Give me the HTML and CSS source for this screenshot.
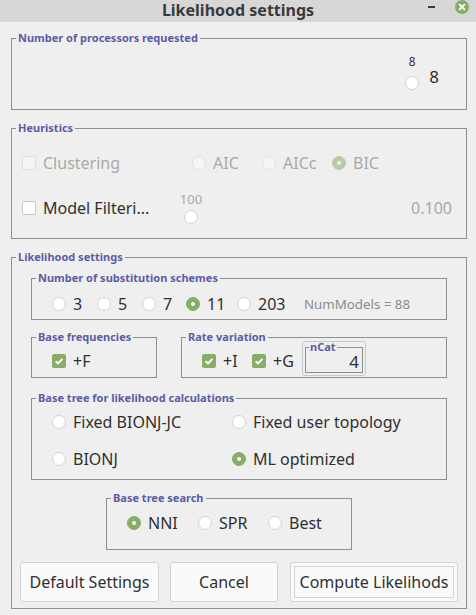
FILE: index.html
```html
<!DOCTYPE html>
<html>
<head>
<meta charset="utf-8">
<link rel="stylesheet" href="styles.css">
</head>
<body>
<div class="titlebar">
  <span class="title">Likelihood settings</span>
  <span class="minimize"></span>
  <span class="close"><svg width="14" height="14" viewBox="0 0 14 14"><circle cx="7" cy="7" r="7" fill="#87ad65"/><path d="M4.6 4.6 L9.4 9.4 M9.4 4.6 L4.6 9.4" stroke="#fff" stroke-width="1.8" stroke-linecap="round"/></svg></span>
</div>
<div class="content">
  <fieldset class="group g-proc">
    <legend>Number of processors requested</legend>
    <div class="proc-body">
      <div class="slider">
        <span class="slider-label">8</span>
        <span class="knob"></span>
      </div>
      <span class="proc-value">8</span>
    </div>
  </fieldset>

  <fieldset class="group g-heur">
    <legend>Heuristics</legend>
    <div class="heur-body">
      <div class="heur-row1">
        <label class="item disabled"><span class="check dis"></span>Clustering</label>
        <label class="item disabled"><span class="radio dis"></span>AIC</label>
        <label class="item disabled"><span class="radio dis"></span>AICc</label>
        <label class="item disabled"><span class="radio dis-on"></span>BIC</label>
      </div>
      <div class="heur-row2">
        <label class="item model"><span class="check"></span>Model Filteri...</label>
        <div class="slider slider-heur">
          <span class="slider-label grey">100</span>
          <span class="knob"></span>
        </div>
        <span class="heur-value">0.100</span>
      </div>
    </div>
  </fieldset>

  <fieldset class="group g-like">
    <legend>Likelihood settings</legend>
    <fieldset class="group g-subst">
      <legend>Number of substitution schemes</legend>
      <div class="subst-row">
        <label class="item"><span class="radio"></span>3</label>
        <label class="item"><span class="radio"></span>5</label>
        <label class="item"><span class="radio"></span>7</label>
        <label class="item"><span class="radio on"></span>11</label>
        <label class="item"><span class="radio"></span>203</label>
        <span class="nummodels">NumModels = 88</span>
      </div>
    </fieldset>

    <div class="pair">
      <fieldset class="group g-freq">
        <legend>Base frequencies</legend>
        <div class="pair-row">
          <label class="item"><span class="check on"><svg width="14" height="14" viewBox="0 0 14 14"><path d="M3.6 7.2 L6 9.4 L10.4 4.8" fill="none" stroke="#fff" stroke-width="1.9"/></svg></span>+F</label>
        </div>
      </fieldset>
      <fieldset class="group g-rate">
        <legend>Rate variation</legend>
        <div class="pair-row">
          <label class="item rate-i"><span class="check on"><svg width="14" height="14" viewBox="0 0 14 14"><path d="M3.6 7.2 L6 9.4 L10.4 4.8" fill="none" stroke="#fff" stroke-width="1.9"/></svg></span>+I</label>
          <label class="item rate-g"><span class="check on"><svg width="14" height="14" viewBox="0 0 14 14"><path d="M3.6 7.2 L6 9.4 L10.4 4.8" fill="none" stroke="#fff" stroke-width="1.9"/></svg></span>+G</label>
          <div class="ncat">
            <fieldset class="ncat-fs">
              <legend>nCat</legend>
              <div class="ncat-value">4</div>
            </fieldset>
          </div>
        </div>
      </fieldset>
    </div>

    <fieldset class="group g-tree">
      <legend>Base tree for likelihood calculations</legend>
      <div class="tree-grid">
        <label class="item"><span class="radio"></span>Fixed BIONJ-JC</label>
        <label class="item"><span class="radio"></span>Fixed user topology</label>
        <label class="item"><span class="radio"></span>BIONJ</label>
        <label class="item"><span class="radio on"></span>ML optimized</label>
      </div>
    </fieldset>

    <fieldset class="group g-search">
      <legend>Base tree search</legend>
      <div class="search-row">
        <label class="item"><span class="radio on"></span>NNI</label>
        <label class="item"><span class="radio"></span>SPR</label>
        <label class="item"><span class="radio"></span>Best</label>
      </div>
    </fieldset>

    <div class="buttons">
      <button class="btn btn-default">Default Settings</button>
      <button class="btn btn-cancel">Cancel</button>
      <button class="btn btn-compute"><span class="focus">Compute Likelihods</span></button>
    </div>
  </fieldset>
</div>
</body>
</html>
```

FILE: styles.css
```css
* { box-sizing: border-box; }
html, body {
  margin: 0;
  padding: 0;
  background: #efefef;
  font-family: "Noto Sans", "DejaVu Sans", sans-serif;
  color: #2f2f2f;
  width: 476px;
  height: 615px;
  overflow: hidden;
}

.titlebar {
  height: 22px;
  background: #d7d7d7;
  display: flex;
  align-items: center;
  justify-content: center;
  position: relative;
}
.title {
  font-weight: bold;
  font-size: 16px;
  color: #3a3a3a;
  line-height: 22px;
  margin-top: -3px;
}
.minimize {
  position: absolute;
  left: 428px;
  top: 6px;
  width: 7px;
  height: 2px;
  background: #3a3a3a;
}
.close {
  position: absolute;
  left: 455px;
  top: 0px;
  width: 14px;
  height: 14px;
  display: block;
}
.close svg { display: block; }

.content {
  padding: 9px 9px 0 11px;
}

fieldset.group {
  margin: 0;
  padding: 0;
  border: 1px solid #8f8f8f;
  min-width: 0;
}
fieldset.group > legend {
  font-family: "Noto Sans", "DejaVu Sans", sans-serif;
  font-weight: bold;
  font-size: 11px;
  line-height: 14px;
  color: #5c5ca4;
  padding: 0 2px;
  margin-left: 4px;
}

.item {
  display: flex;
  align-items: center;
  font-size: 16px;
  line-height: 20px;
  white-space: nowrap;
}
.item.disabled { color: #a9a9a9; }

.radio {
  display: inline-block;
  flex: none;
  width: 14px;
  height: 14px;
  border-radius: 50%;
  background: #fff;
  border: 1px solid #d3d3d3;
  margin-right: 7px;
  position: relative;
}
.radio.on {
  background: #88ad67;
  border-color: #88ad67;
}
.radio.on::after, .radio.dis-on::after {
  content: "";
  position: absolute;
  left: 4px;
  top: 4px;
  width: 4px;
  height: 4px;
  border-radius: 50%;
  background: #fff;
}
.radio.dis {
  background: #f6f6f6;
  border-color: #e0e0e0;
}
.radio.dis-on {
  background: #b9cba8;
  border-color: #b9cba8;
}
.radio.dis-on::after { background: #f2f5ef; }

.check {
  display: inline-block;
  flex: none;
  width: 14px;
  height: 14px;
  border-radius: 2px;
  background: #fff;
  border: 1px solid #c6c6c6;
  margin-right: 7px;
}
.check.dis {
  background: #f5f5f5;
  border-color: #dfdfdf;
}
.check.on {
  background: #88ad67;
  border-color: #88ad67;
  position: relative;
}
.check.on svg {
  display: block;
  margin: -1px;
}

.knob {
  display: block;
  width: 14px;
  height: 14px;
  border-radius: 50%;
  background: #fff;
  border: 1px solid #d3d3d3;
}

/* processors */
.proc-body {
  height: 64px;
  display: flex;
  justify-content: flex-end;
  align-items: flex-start;
  padding: 10px 27px 0 0;
}
.slider {
  display: flex;
  flex-direction: column;
  align-items: center;
  width: 14px;
}
.slider-label {
  font-size: 12px;
  line-height: 14px;
  color: #333;
}
.slider-label.grey { color: #a9a9a9; font-size: 13px; }
.slider .knob { margin-top: 7px; }
.proc-value {
  font-size: 17px;
  line-height: 20px;
  margin-top: 12px;
  margin-left: 10px;
}

/* heuristics */
fieldset.g-heur { margin-top: 11px; }
.heur-body {
  height: 103px;
  padding: 18px 14px 0 10px;
}
.heur-row1 {
  display: grid;
  grid-template-columns: 170px 70px 70px auto;
  height: 20px;
}
.heur-row2 {
  display: flex;
  align-items: center;
  height: 32px;
  margin-top: 19px;
}
.heur-row2 .model { width: 157px; }
.slider-heur { width: 24px; }
.slider-heur .knob { margin-top: 4px; }
.heur-value {
  margin-left: auto;
  font-size: 16px;
  color: #a9a9a9;
}

/* likelihood */
fieldset.g-like { margin-top: 11px; }
.g-like > fieldset.group,
.g-like > .pair {
  margin-left: 19px;
  margin-right: 19px;
}
.g-like > fieldset.g-subst { margin-top: 7px; }
.subst-row {
  display: grid;
  grid-template-columns: 45px 45px 44px 51px 67px auto;
  align-items: center;
  height: 34px;
  padding: 9px 0 0 20px;
  align-content: start;
}
.nummodels {
  font-size: 13.3px;
  color: #8c8c8c;
  line-height: 20px;
}

.g-like > .pair {
  display: flex;
  margin-top: 10px;
}
fieldset.g-freq { width: 126px; flex: none; }
fieldset.g-rate { width: 266px; margin-left: 24px; flex: none; }
.pair-row {
  display: flex;
  align-items: flex-start;
  height: 33px;
  padding: 7px 0 0 20px;
}
.rate-i { width: 50px; }
.rate-g { width: 50px; }
.ncat {
  margin-top: -10px;
  width: 64px;
  height: 35px;
  border: 1px solid #c9c9c9;
  border-radius: 3px;
  padding: 0 2px 2px 2px;
}
.ncat-fs {
  margin: 0;
  padding: 0;
  border: 1px solid #8f8f8f;
  min-width: 0;
  width: 58px;
}
.ncat-fs > legend {
  font-weight: bold;
  font-size: 11px;
  line-height: 10px;
  color: #5c5ca4;
  padding: 0 1px;
  margin-left: 3px;
}
.ncat-value {
  text-align: right;
  font-size: 17px;
  line-height: 20px;
  padding-right: 3px;
}

.g-like > fieldset.g-tree { margin-top: 13px; }
.tree-grid {
  display: grid;
  grid-template-columns: 180px auto;
  grid-auto-rows: 20px;
  row-gap: 17px;
  height: 74px;
  padding: 7px 0 0 20px;
}

.g-like > fieldset.g-search {
  margin-top: 11px;
  margin-left: 94px;
  width: 246px;
}
.search-row {
  display: grid;
  grid-template-columns: 71px 70px auto;
  height: 44px;
  padding: 8px 0 0 20px;
  align-content: start;
}

.buttons {
  display: flex;
  margin: 12px 0 6px 8px;
}
.btn {
  font-family: "Noto Sans", "DejaVu Sans", sans-serif;
  font-size: 16px;
  color: #2f2f2f;
  height: 40px;
  background: #fafafa;
  border: 1px solid #d4d4d4;
  border-radius: 3px;
  padding: 0;
  white-space: nowrap;
  flex: none;
}
.btn-default { width: 139px; }
.btn-cancel { width: 108px; margin-left: 11px; }
.btn-compute { width: 168px; margin-left: 12px; padding: 3px; }
.btn-compute .focus {
  display: flex;
  align-items: center;
  justify-content: center;
  height: 100%;
  border: 1px solid #d4d4d4;
}
```
